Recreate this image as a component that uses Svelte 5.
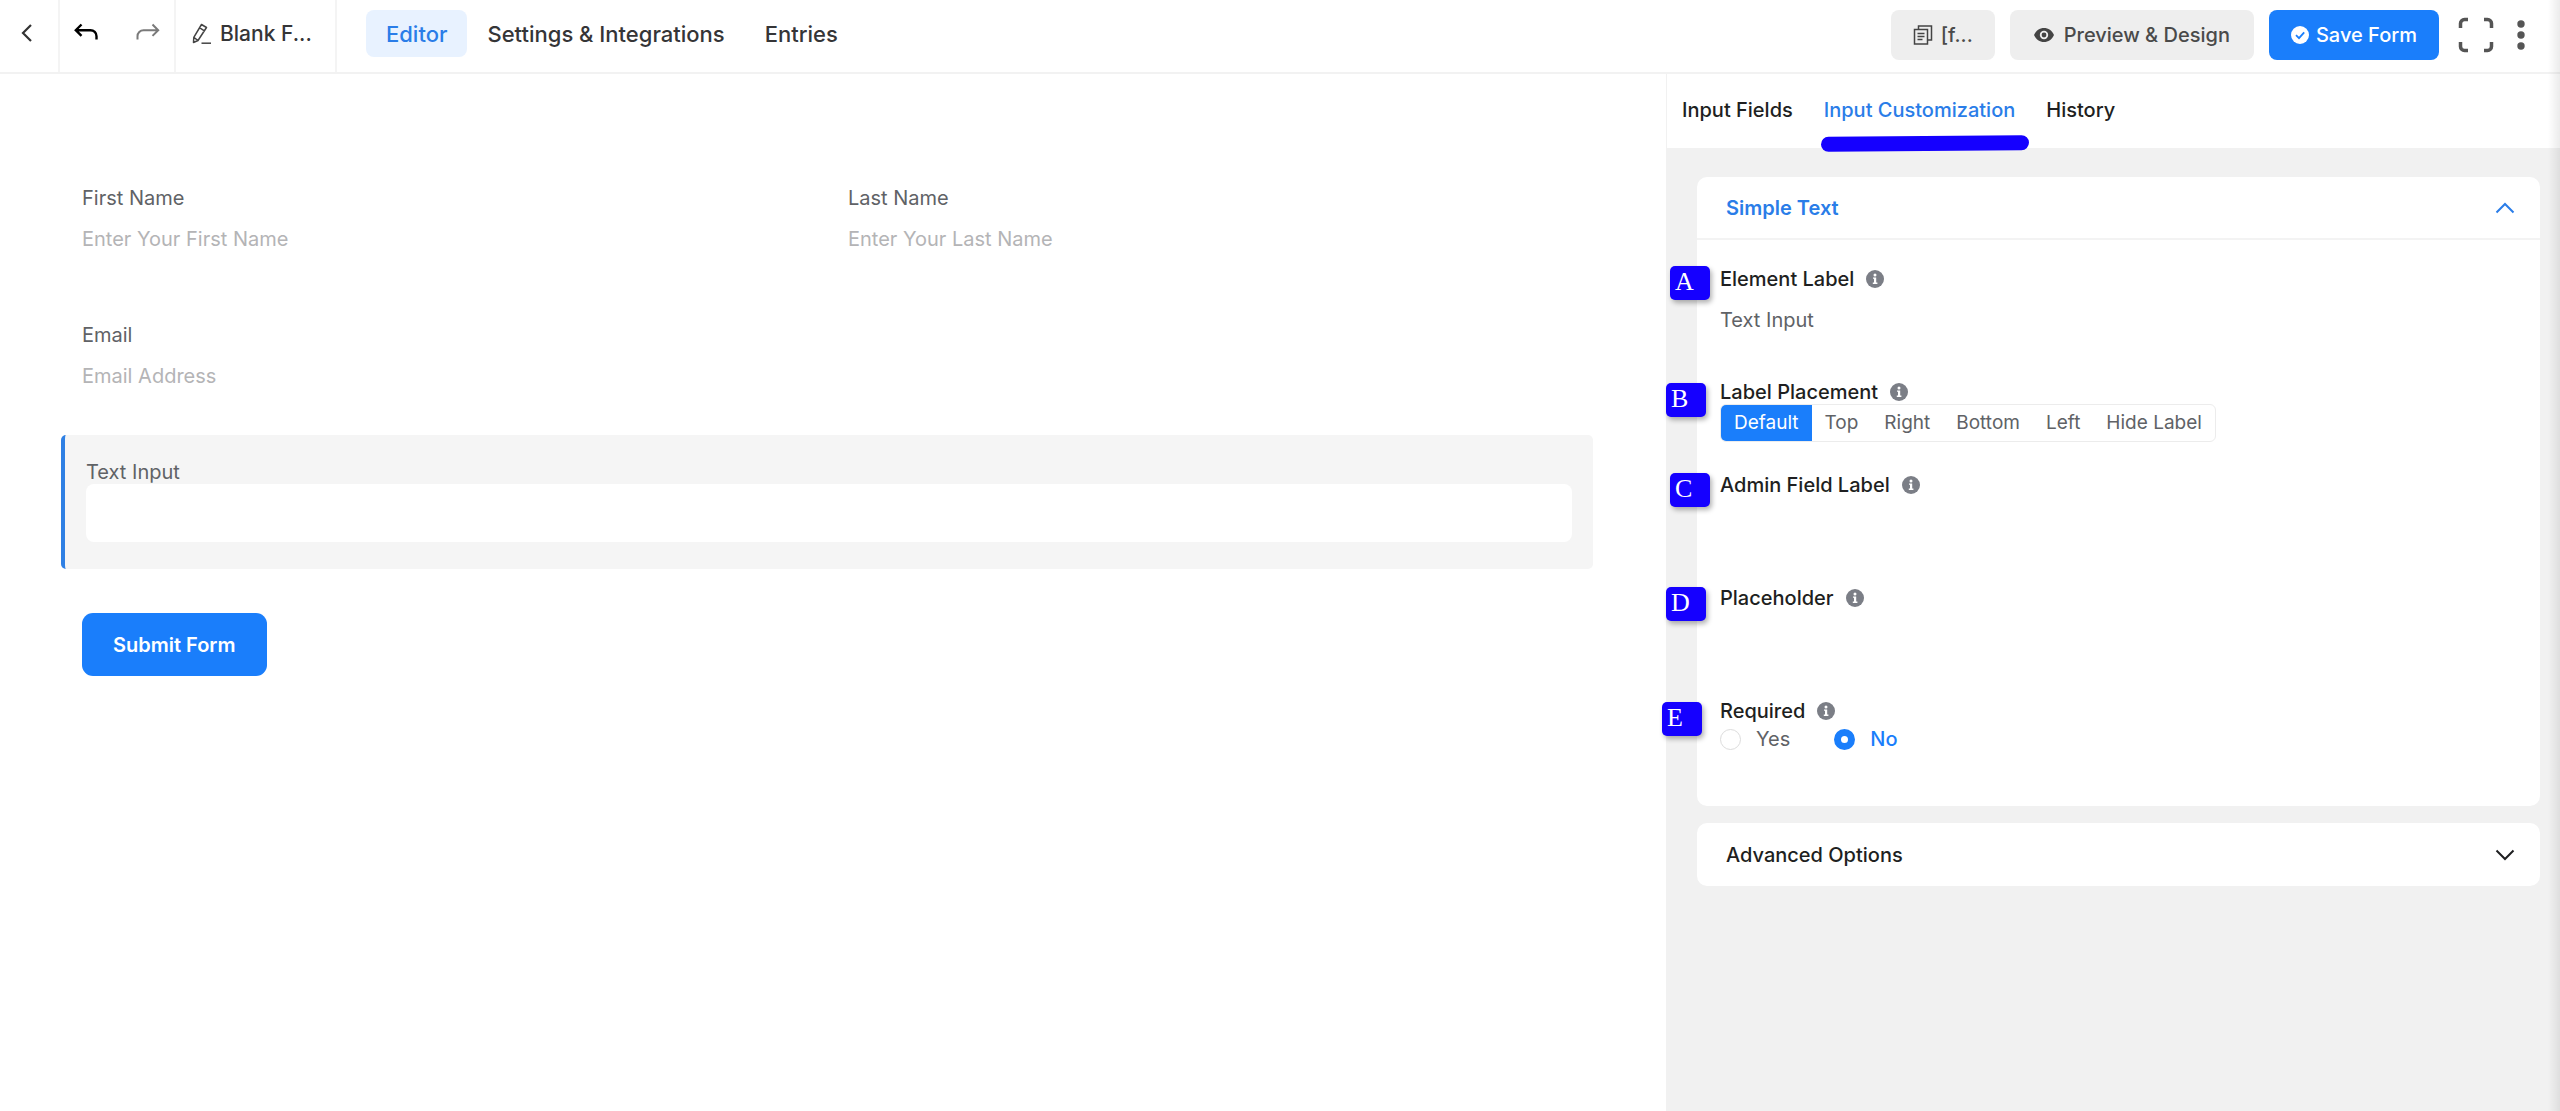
<script lang="ts">
	type Tab = { id: string; label: string };

	const pages: Tab[] = [
		{ id: 'editor', label: 'Editor' },
		{ id: 'settings', label: 'Settings & Integrations' },
		{ id: 'entries', label: 'Entries' }
	];

	const panels: Tab[] = [
		{ id: 'fields', label: 'Input Fields' },
		{ id: 'customization', label: 'Input Customization' },
		{ id: 'history', label: 'History' }
	];

	const placements = ['Default', 'Top', 'Right', 'Bottom', 'Left', 'Hide Label'];

	// callout pins, placed relative to the customization panel
	const pins = [
		{ letter: 'A', x: 4, y: 118 },
		{ letter: 'B', x: 0, y: 235 },
		{ letter: 'C', x: 4, y: 325 },
		{ letter: 'D', x: 0, y: 439 },
		{ letter: 'E', x: -4, y: 554 }
	];

	let activePage = $state('editor');
	let activePanel = $state('customization');
	let placement = $state('Default');
	let required = $state('no');
	let elementLabel = $state('Text Input');
	let adminLabel = $state('');
	let placeholder = $state('');
	let simpleOpen = $state(true);
	let advancedOpen = $state(false);
</script>

{#snippet info()}
	<svg class="info" viewBox="0 0 18 18" aria-hidden="true">
		<circle cx="9" cy="9" r="9" fill="#7b7e86" />
		<path d="M7 7.4h3.2v5.2h1.2V14H6.8v-1.400H8V8.800H7z" fill="#fff" />
		<circle cx="9" cy="4.900" r="1.500" fill="#fff" />
	</svg>
{/snippet}

{#snippet chevron(open: boolean)}
	<svg class="chevron" class:open viewBox="0 0 20 12" aria-hidden="true">
		<path d="M1.5 1.5 10 10l8.5-8.5" fill="none" stroke="currentColor" stroke-width="2" />
	</svg>
{/snippet}

<div class="app">
	<header class="topbar">
		<button class="back" aria-label="Back">
			<svg width="12" height="20" viewBox="0 0 12 20">
				<path d="M10 2 2 10l8 8" fill="none" stroke="#333" stroke-width="2.2" />
			</svg>
		</button>
		<div class="history">
			<button aria-label="Undo">
				<svg width="24" height="18" viewBox="0 0 24 18">
					<path
						d="M7.5 1.5 1.8 7.2l5.7 5.7M2 7.2h14.5a6 6 0 0 1 6 6v3.3"
						fill="none"
						stroke="#000"
						stroke-width="2.4"
					/>
				</svg>
			</button>
			<button aria-label="Redo">
				<svg width="24" height="18" viewBox="0 0 24 18">
					<path
						d="m16.5 1.500 5.700 5.700-5.700 5.700M22 7.200H7.500a6 6 0 0 0-6 6v3.300"
						fill="none"
						stroke="#7a7a7a"
						stroke-width="2"
					/>
				</svg>
			</button>
		</div>
		<button class="title">
			<svg width="20" height="22" viewBox="0 0 20 22">
				<g fill="none" stroke="#444" stroke-width="1.5" stroke-linejoin="round">
					<path d="m9.5 1.5 5 3L6 17.500l-4.500 2 .3-5.200zM7.400 4.700l5 3.100M1.800 14.300 6 17.500" />
					<path d="M9.5 20.2H19" />
				</g>
			</svg>
			<span>Blank F...</span>
		</button>
		<nav class="pages">
			{#each pages as page (page.id)}
				<a
					href="#{page.id}"
					class:active={activePage === page.id}
					onclick={() => (activePage = page.id)}>{page.label}</a
				>
			{/each}
		</nav>
		<div class="actions">
			<button class="btn compact">
				<svg width="20" height="20" viewBox="0 0 20 20">
					<g fill="none" stroke="#444" stroke-width="1.5">
						<path d="M5.5 4V1h13v14H15" />
						<path d="M1.500 4.500h13V19h-13zM4.500 8.500h7M4.500 11.500h7M4.500 14.500h5" />
					</g>
				</svg>
				<span>[f...</span>
			</button>
			<button class="btn preview">
				<svg width="20" height="14" viewBox="0 0 20 14">
					<path d="M0 7c2-4.500 5.700-7 10-7s8 2.500 10 7c-2 4.500-5.700 7-10 7S2 11.500 0 7z" fill="#444" />
					<circle cx="10" cy="7" r="4.200" fill="#eee" />
					<circle cx="10" cy="7" r="2.400" fill="#444" />
				</svg>
				<span>Preview &amp; Design</span>
			</button>
			<button class="btn primary">
				<svg width="18" height="18" viewBox="0 0 18 18">
					<circle cx="9" cy="9" r="9" fill="#fff" />
					<path d="m5 9.200 3 3 5.200-5.800" fill="none" stroke="#1a7efb" stroke-width="1.8" />
				</svg>
				<span>Save Form</span>
			</button>
			<button class="icon" aria-label="Fullscreen">
				<svg width="36" height="36" viewBox="0 0 36 36">
					<path
						d="M2.500 11V6.500a4 4 0 0 1 4-4H10M26 2.500h3.500a4 4 0 0 1 4 4V11M33.500 25v4.500a4 4 0 0 1-4 4H26M10 33.500H6.500a4 4 0 0 1-4-4V25"
						fill="none"
						stroke="#555"
						stroke-width="3.500"
					/>
				</svg>
			</button>
			<button class="icon" aria-label="More">
				<svg width="16" height="30" viewBox="0 0 16 30">
					<g fill="#555">
						<circle cx="8" cy="4" r="3.700" />
						<circle cx="8" cy="15" r="3.700" />
						<circle cx="8" cy="26" r="3.700" />
					</g>
				</svg>
			</button>
		</div>
	</header>

	<div class="workspace">
		<main class="canvas">
			<div class="row">
				<div class="field">
					<label for="first">First Name</label>
					<input id="first" type="text" placeholder="Enter Your First Name" />
				</div>
				<div class="field">
					<label for="last">Last Name</label>
					<input id="last" type="text" placeholder="Enter Your Last Name" />
				</div>
			</div>
			<div class="field">
				<label for="email">Email</label>
				<input id="email" type="email" placeholder="Email Address" />
			</div>
			<div class="field selected">
				<label for="text">{elementLabel}</label>
				<input id="text" type="text" {placeholder} />
			</div>
			<button class="submit">Submit Form</button>
		</main>

		<aside class="sidebar">
			<nav class="tabs">
				{#each panels as panel (panel.id)}
					<a
						href="#{panel.id}"
						class:active={activePanel === panel.id}
						onclick={() => (activePanel = panel.id)}>{panel.label}</a
					>
				{/each}
			</nav>

			<div class="panel">
				<section class="card">
					<button class="card-head" class:open={simpleOpen} onclick={() => (simpleOpen = !simpleOpen)}>
						<span>Simple Text</span>
						{@render chevron(simpleOpen)}
					</button>
					{#if simpleOpen}
						<div class="card-body">
							<div class="option">
								<label for="element-label">Element Label {@render info()}</label>
								<input id="element-label" type="text" bind:value={elementLabel} />
							</div>
							<div class="option">
								<div class="caption" id="placement">Label Placement {@render info()}</div>
								<div class="segments" role="radiogroup" aria-labelledby="placement">
									{#each placements as name (name)}
										<label class:checked={placement === name}>
											<input type="radio" name="placement" value={name} bind:group={placement} />
											{name}
										</label>
									{/each}
								</div>
							</div>
							<div class="option">
								<label for="admin-label">Admin Field Label {@render info()}</label>
								<input id="admin-label" type="text" bind:value={adminLabel} />
							</div>
							<div class="option">
								<label for="placeholder">Placeholder {@render info()}</label>
								<input id="placeholder" type="text" bind:value={placeholder} />
							</div>
							<div class="option">
								<div class="caption" id="required">Required {@render info()}</div>
								<div class="radios" role="radiogroup" aria-labelledby="required">
									<label class:checked={required === 'yes'}>
										<input type="radio" name="required" value="yes" bind:group={required} />
										Yes
									</label>
									<label class:checked={required === 'no'}>
										<input type="radio" name="required" value="no" bind:group={required} />
										No
									</label>
								</div>
							</div>
						</div>
					{/if}
				</section>

				<section class="card">
					<button
						class="card-head"
						class:open={advancedOpen}
						onclick={() => (advancedOpen = !advancedOpen)}
					>
						<span>Advanced Options</span>
						{@render chevron(advancedOpen)}
					</button>
				</section>

				{#each pins as pin (pin.letter)}
					<span class="pin" style="left: {pin.x}px; top: {pin.y}px">{pin.letter}</span>
				{/each}
			</div>
		</aside>
	</div>
</div>

<style>
	:global(body) {
		margin: 0;
		background: #fff;
	}

	.app {
		position: relative;
		display: flex;
		flex-direction: column;
		min-height: 100vh;
		font-family: Inter, 'Liberation Sans', sans-serif;
		font-size: 20px;
		line-height: 24px;
		color: #1e1f21;
	}

	/* soft shade along the window edge */
	.app::after {
		content: '';
		position: absolute;
		top: 0;
		right: 0;
		bottom: 0;
		width: 12px;
		background: linear-gradient(to right, rgba(0, 0, 0, 0), rgba(0, 0, 0, 0.08));
		pointer-events: none;
	}

	.app * {
		box-sizing: border-box;
	}

	button,
	input {
		font: inherit;
		color: inherit;
		border: 0;
		padding: 0;
		background: none;
	}

	button {
		display: flex;
		align-items: center;
		cursor: pointer;
	}

	input {
		outline: none;
	}

	a {
		color: inherit;
		text-decoration: none;
	}

	/* top bar */
	.topbar {
		display: flex;
		height: 74px;
		border-bottom: 2px solid #f2f2f2;
		font-weight: 500;
		color: #353537;
	}

	.back {
		width: 60px;
		padding: 0 4px 7px 0;
		justify-content: center;
		border-right: 2px solid #f4f4f4;
	}

	.history {
		display: flex;
		align-items: center;
		gap: 38px;
		padding: 0 14px 8px;
		border-right: 2px solid #f4f4f4;
	}

	.title {
		width: 161px;
		gap: 8px;
		padding: 0 0 4px 16px;
		border-right: 2px solid #f4f4f4;
		font-size: 21px;
		font-weight: 500;
	}

	.pages {
		display: flex;
		padding: 10px 0 15px 29px;
		font-size: 22px;
	}

	.pages a {
		display: flex;
		align-items: center;
		padding: 0 20px;
		border-radius: 8px;
	}

	.pages a.active {
		background: #e8f2ff;
		color: #2a7de8;
	}

	.actions {
		display: flex;
		align-items: center;
		gap: 15px;
		margin-left: auto;
		padding: 0 31px 3px 0;
	}

	.btn {
		height: 50px;
		padding: 0 22px;
		gap: 10px;
		border-radius: 8px;
		background: #eee;
		font-weight: 500;
		color: #4a4a4a;
	}

	.btn.compact {
		gap: 8px;
	}

	.btn.preview {
		padding: 0 24px;
	}

	.btn.primary {
		gap: 7px;
		background: #1a7efb;
		color: #fff;
	}

	.icon {
		margin-left: 4px;
	}

	/* form canvas */
	.workspace {
		display: flex;
		flex: 1;
	}

	.canvas {
		flex: 1;
		padding: 90px 73px 0 61px;
		color: #606266;
	}

	.row {
		display: grid;
		grid-template-columns: 1fr 1fr;
		margin-bottom: 3px;
	}

	.field {
		display: flex;
		flex-direction: column;
		height: 134px;
		padding: 22px 21px 0;
	}

	.field input {
		height: 58px;
	}

	.field input::placeholder {
		color: #b4b4b6;
		opacity: 1;
	}

	.field.selected {
		padding-top: 25px;
		border-left: 4px solid #2f80e4;
		border-radius: 5px;
		background: #f5f5f5;
	}

	.selected input {
		padding: 0 16px;
		border-radius: 8px;
		background: #fff;
	}

	.submit {
		height: 63px;
		margin: 44px 21px;
		padding: 0 31px;
		border-radius: 11px;
		background: #1a7efb;
		font-weight: 600;
		color: #fff;
	}

	/* sidebar */
	.sidebar {
		display: flex;
		flex-direction: column;
		width: 894px;
		background: #f1f1f1;
	}

	.tabs {
		display: flex;
		gap: 31px;
		height: 74px;
		padding: 24px 15px 0;
		border-left: 1px solid #f1f1f1;
		background: #fff;
		font-weight: 500;
	}

	.tabs a {
		position: relative;
	}

	.tabs .active {
		color: #2a7de8;
	}

	.tabs .active::after {
		content: '';
		position: absolute;
		left: -3px;
		right: -14px;
		top: 38px;
		height: 15px;
		border-radius: 8px;
		background: #1500ff;
		transform: rotate(-0.5deg);
		z-index: 1;
	}

	.panel {
		position: relative;
		display: flex;
		flex-direction: column;
		gap: 17px;
		padding: 29px 20px 20px 31px;
	}

	.card {
		border-radius: 10px;
		background: #fff;
	}

	.card-head {
		justify-content: space-between;
		width: 100%;
		height: 63px;
		padding: 0 25px 0 29px;
		font-weight: 500;
	}

	.card-head.open {
		border-bottom: 2px solid #f3f3f3;
		font-weight: 600;
		color: #2a7de8;
	}

	.chevron {
		width: 20px;
		height: 12px;
	}

	.chevron.open {
		transform: rotate(180deg);
	}

	.card-body {
		display: flex;
		flex-direction: column;
		padding: 27px 23px 55px;
	}

	.option {
		display: flex;
		flex-direction: column;
		align-items: flex-start;
	}

	.option > label,
	.caption {
		display: flex;
		align-items: center;
		gap: 12px;
		font-weight: 500;
	}

	.option > input {
		width: 100%;
		height: 58px;
		margin-bottom: 31px;
		color: #606266;
	}

	.info {
		width: 18px;
		height: 18px;
	}

	.segments {
		display: flex;
		height: 38px;
		margin-bottom: 31px;
		border: 1px solid #ececec;
		border-radius: 6px;
		overflow: hidden;
		font-size: 19px;
		color: #606266;
	}

	.segments label {
		display: flex;
		align-items: center;
		padding: 0 13px;
	}

	.segments label.checked {
		background: #1a7efb;
		color: #fff;
	}

	.segments input {
		position: absolute;
		appearance: none;
	}

	.radios {
		display: flex;
		gap: 44px;
		margin-top: 4px;
		color: #606266;
	}

	.radios label {
		display: flex;
		align-items: center;
		gap: 15px;
	}

	.radios label.checked {
		color: #1a7efb;
		font-weight: 500;
	}

	.radios input {
		appearance: none;
		width: 21px;
		height: 21px;
		margin: 0;
		border: 1px solid #dcdcdc;
		border-radius: 50%;
		background: #fff;
	}

	.radios input:checked {
		border: 7px solid #1a7efb;
	}

	.pin {
		position: absolute;
		width: 40px;
		height: 34px;
		padding-left: 5px;
		border-radius: 5px;
		background: #1500ff;
		box-shadow: 2px 3px 5px rgba(0, 0, 0, 0.3);
		font-family: 'Liberation Serif', serif;
		font-size: 26px;
		line-height: 31px;
		color: #fff;
	}
</style>
